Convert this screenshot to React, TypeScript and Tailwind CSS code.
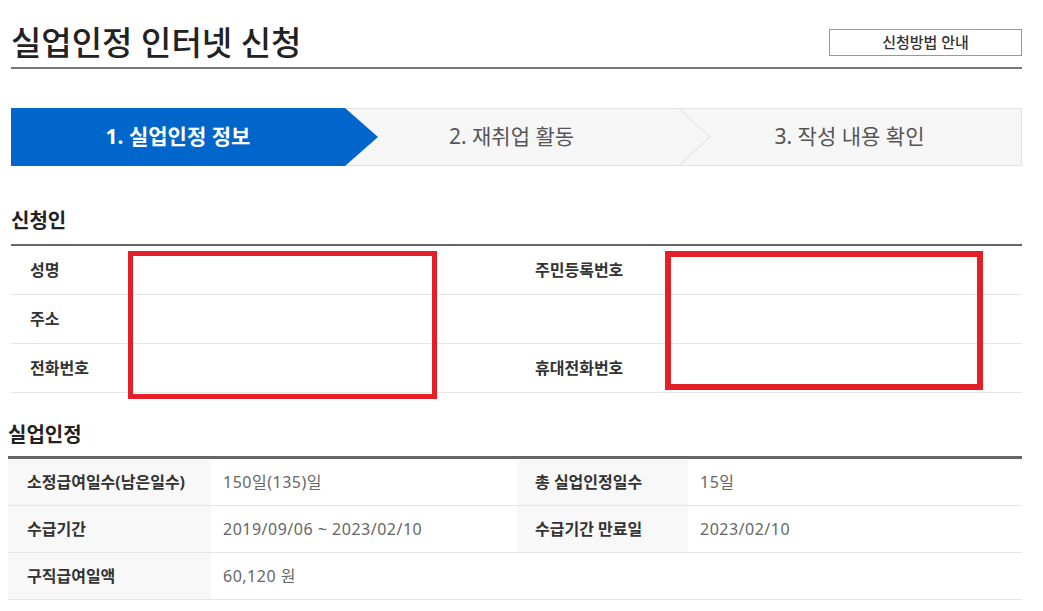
import React from "react";

/**
 * 실업인정 인터넷 신청 — step 1 (실업인정 정보)
 */

type Row = { label: string; value?: string; label2?: string; value2?: string };

const applicantRows: Row[] = [
  { label: "성명", label2: "주민등록번호" },
  { label: "주소" },
  { label: "전화번호", label2: "휴대전화번호" },
];

const recognitionRows: Row[] = [
  { label: "소정급여일수(남은일수)", value: "150일(135)일", label2: "총 실업인정일수", value2: "15일" },
  { label: "수급기간", value: "2019/09/06 ~ 2023/02/10", label2: "수급기간 만료일", value2: "2023/02/10" },
  { label: "구직급여일액", value: "60,120 원" },
];

function SectionTitle({ children, className = "" }: { children: React.ReactNode; className?: string }) {
  return <h2 className={`text-[20px] leading-[26px] font-bold text-[#222] ${className}`}>{children}</h2>;
}

function Steps() {
  return (
    <div className="mt-[39px] flex h-[58px]">
      <div className="relative z-10 flex w-[334px] items-center justify-center bg-[#0066cc] text-[21px] font-bold text-white">
        1. 실업인정 정보
        <svg className="absolute left-full top-0 h-full w-[33px]" viewBox="0 0 33 58" preserveAspectRatio="none">
          <polygon points="0,0 33,29 0,58" fill="#0066cc" />
        </svg>
      </div>
      <div className="relative flex w-[333px] items-center justify-center border-y border-[#e2e2e2] bg-[#f6f6f6] text-[21px] text-[#555]">
        2. 재취업 활동
        <svg className="absolute left-full -top-px z-10 h-[58px] w-[33px]" viewBox="0 0 33 58" preserveAspectRatio="none">
          <polyline points="0,0 32,29 0,58" fill="none" stroke="#dcdcdc" strokeWidth="1" />
        </svg>
      </div>
      <div className="flex flex-1 items-center justify-center border-y border-r border-[#e2e2e2] bg-[#f6f6f6] text-[21px] text-[#555]">
        3. 작성 내용 확인
      </div>
    </div>
  );
}

export default function App() {
  return (
    <div className="min-h-[611px] w-[1043px] bg-white pl-[11px] pr-[21px] font-['Noto_Sans','Noto_Sans_CJK_KR',sans-serif] text-[#333]">
      {/* header */}
      <div className="flex h-[69px] items-center justify-between border-b-2 border-[#777] pt-[18px]">
        <h1 className="text-[33px] font-medium leading-none text-[#222]">실업인정 인터넷 신청</h1>
        <button className="flex h-[27px] w-[193px] items-center justify-center border border-[#999] bg-white text-[15px] font-medium text-[#333]">
          신청방법 안내
        </button>
      </div>

      <Steps />

      {/* 신청인 */}
      <SectionTitle className="mt-[42px]">신청인</SectionTitle>
      <div className="relative mt-[10px] border-t-2 border-[#666]">
        {applicantRows.map((r) => (
          <div key={r.label} className="grid h-[49px] grid-cols-[506px_1fr] items-center border-b border-[#e6e6e6] text-[16px] font-bold text-[#333]">
            <div className="pl-[19px]">{r.label}</div>
            <div className="pl-[18px]">{r.label2}</div>
          </div>
        ))}
        <div className="absolute left-[117px] top-[5px] h-[148px] w-[309px] border-[5px] border-[#e3202a]" />
        <div className="absolute left-[654px] top-[5px] h-[139px] w-[318px] border-[6px] border-[#e3202a]" />
      </div>

      {/* 실업인정 */}
      <div className="-ml-[3px]">
        <SectionTitle className="mt-[29px]">실업인정</SectionTitle>
        <div className="mt-[8px] border-t-[3px] border-[#666]">
          {recognitionRows.map((r) => (
            <div
              key={r.label}
              className="grid h-[47px] grid-cols-[203px_306px_171px_1fr] border-b border-[#e6e6e6] text-[16px]"
            >
              <div className="flex items-center bg-[#f8f8f8] pl-[19px] font-bold text-[#333]">{r.label}</div>
              <div className="flex items-center pl-[12px] tracking-[0.5px] text-[#666]">{r.value}</div>
              {r.label2 ? (
                <div className="flex items-center bg-[#f8f8f8] pl-[18px] font-bold text-[#333]">{r.label2}</div>
              ) : (
                <div />
              )}
              <div className="flex items-center pl-[12px] tracking-[0.5px] text-[#666]">{r.value2}</div>
            </div>
          ))}
        </div>
      </div>
    </div>
  );
}
